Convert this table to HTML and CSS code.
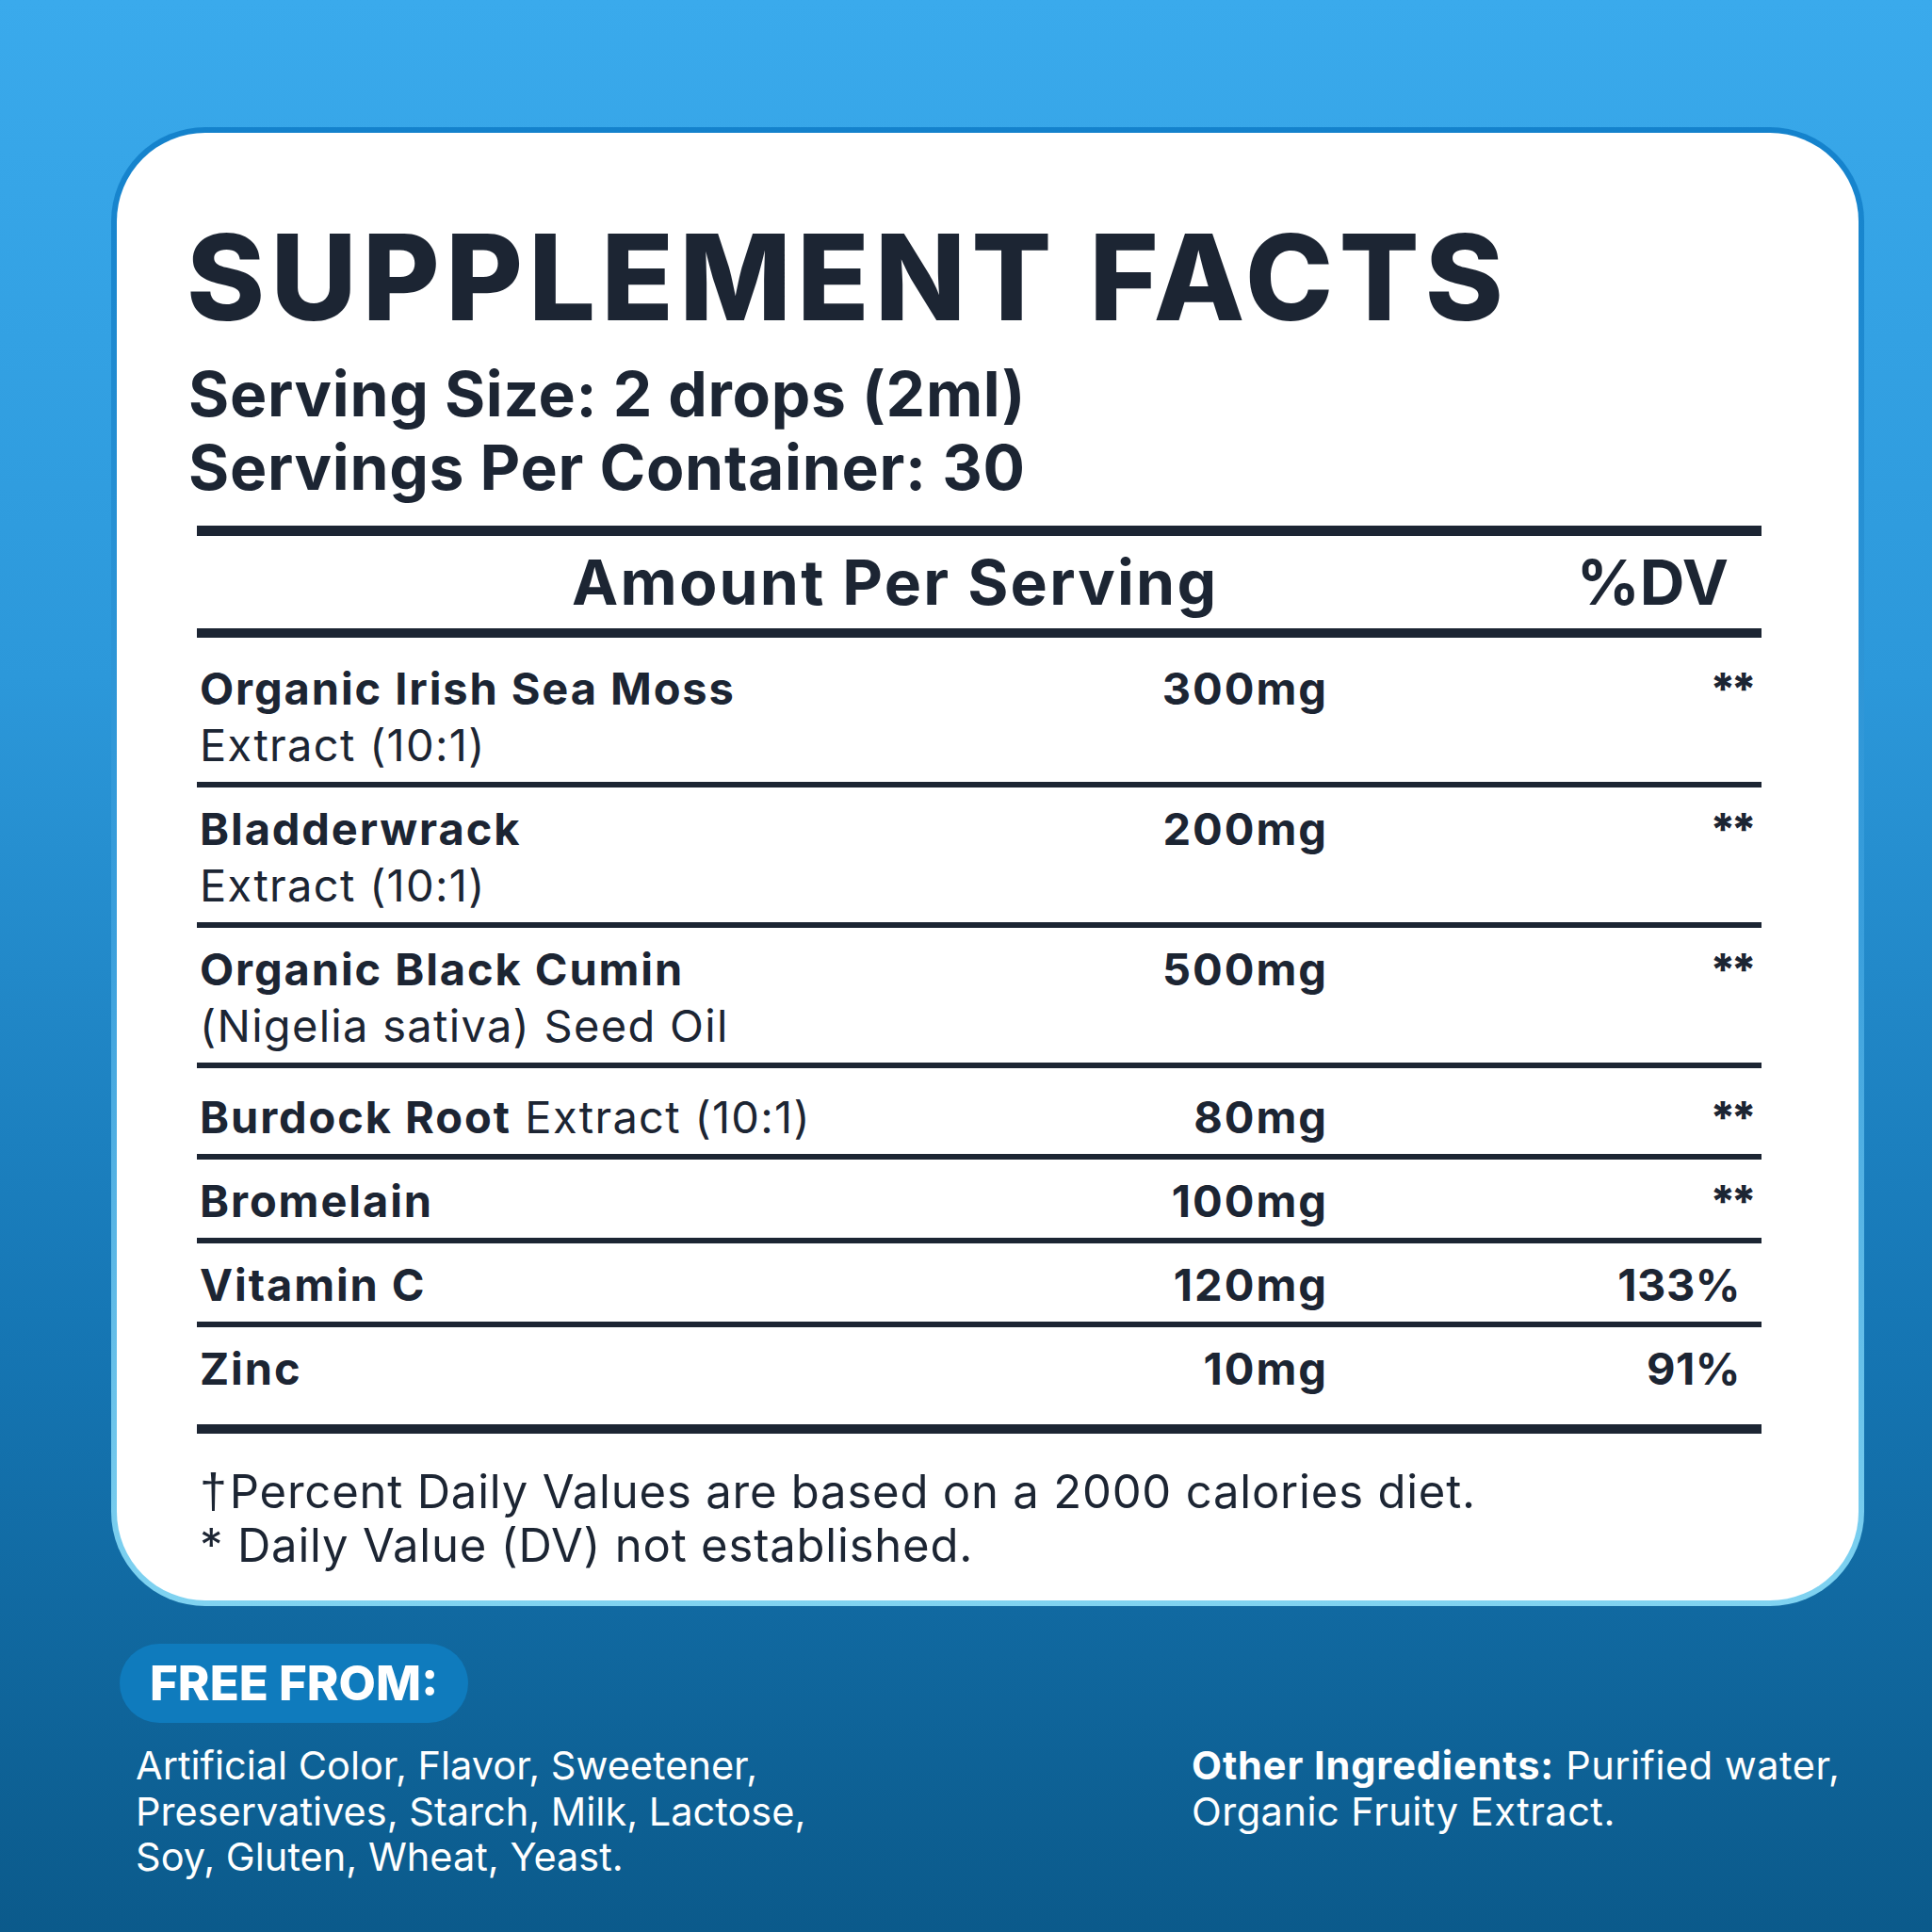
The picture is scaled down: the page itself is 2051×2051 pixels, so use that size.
FILE: index.html
```html
<!DOCTYPE html>
<html lang="en">
<head>
<meta charset="utf-8">
<title>Supplement Facts</title>
<link rel="stylesheet" href="styles.css">
</head>
<body>
<div class="page">
  <section class="card">
    <h1 class="title">SUPPLEMENT FACTS</h1>
    <p class="serving">Serving Size: 2 drops (2ml)</p>
    <p class="serving">Servings Per Container: 30</p>
    <div class="facts">
      <div class="facts-head">
        <span class="head-amount">Amount Per Serving</span>
        <span class="head-dv">%DV</span>
      </div>
      <div class="row row-first">
        <div class="name"><b>Organic Irish Sea Moss</b><br>Extract (10:1)</div>
        <div class="amt">300mg</div>
        <div class="dv">**</div>
      </div>
      <div class="row">
        <div class="name"><b>Bladderwrack</b><br>Extract (10:1)</div>
        <div class="amt">200mg</div>
        <div class="dv">**</div>
      </div>
      <div class="row">
        <div class="name"><b>Organic Black Cumin</b><br>(Nigelia sativa) Seed Oil</div>
        <div class="amt">500mg</div>
        <div class="dv">**</div>
      </div>
      <div class="row row-spaced">
        <div class="name"><b>Burdock Root</b> Extract (10:1)</div>
        <div class="amt">80mg</div>
        <div class="dv">**</div>
      </div>
      <div class="row">
        <div class="name"><b>Bromelain</b></div>
        <div class="amt">100mg</div>
        <div class="dv">**</div>
      </div>
      <div class="row">
        <div class="name"><b>Vitamin C</b></div>
        <div class="amt">120mg</div>
        <div class="dv pct">133%</div>
      </div>
      <div class="row row-last">
        <div class="name"><b>Zinc</b></div>
        <div class="amt">10mg</div>
        <div class="dv pct">91%</div>
      </div>
    </div>
    <div class="notes">
      <p><span class="dagger">†</span>Percent Daily Values are based on a 2000 calories diet.</p>
      <p>* Daily Value (DV) not established.</p>
    </div>
  </section>
  <section class="bottom">
    <div class="pill">FREE FROM:</div>
    <p class="free-list">Artificial Color, Flavor, Sweetener,<br>Preservatives, Starch, Milk, Lactose,<br>Soy, Gluten, Wheat, Yeast.</p>
    <p class="other"><b>Other Ingredients:</b> Purified water,<br>Organic Fruity Extract.</p>
  </section>
</div>
</body>
</html>
```

FILE: styles.css
```css
* { box-sizing: border-box; }
html, body { margin: 0; padding: 0; }
body { font-family: "Inter", "Noto Sans", sans-serif; color: #1c2533; }
p, h1 { margin: 0; }

.page {
  width: 2051px;
  height: 2051px;
  padding-top: 135px;
  background: linear-gradient(180deg, #3aaaec 0%, #2c98da 35%, #1677b5 68%, #0b5a8b 100%);
  overflow: hidden;
}

.card {
  margin-left: 118px;
  width: 1861px;
  height: 1570px;
  border: 6px solid transparent;
  border-radius: 100px;
  background:
    linear-gradient(#ffffff, #ffffff) padding-box,
    linear-gradient(180deg, #1482cc 0%, #3a9fdc 55%, #80d3f1 100%) border-box;
  padding: 90px 0 0 76px;
}

.title {
  font-size: 126px;
  line-height: 126px;
  font-weight: 800;
  letter-spacing: 6px;
  margin-left: -2px;
}

.serving {
  font-size: 66px;
  line-height: 78px;
  font-weight: 700;
  letter-spacing: 0.7px;
}
.title + .serving { margin-top: 22px; }

.facts {
  margin: 23px 0 0 9px;
  width: 1661px;
  border-top: 11px solid #1c2533;
  border-bottom: 10px solid #1c2533;
}

.facts-head {
  display: flex;
  justify-content: space-between;
  height: 108px;
  border-bottom: 10px solid #1c2533;
  padding: 0 35px 0 398px;
  font-size: 66px;
  line-height: 98px;
  font-weight: 700;
}
.head-amount { letter-spacing: 2.2px; }

.row {
  display: grid;
  grid-template-columns: 1fr 260px 460px;
  padding: 14px 0 9px 3px;
  border-bottom: 6px solid #1c2533;
  font-size: 47px;
  line-height: 60px;
  font-weight: 400;
  letter-spacing: 1.3px;
}
.row b { font-weight: 700; letter-spacing: 1.9px; }
.row-first { padding-top: 24px; }
.row-spaced { padding-top: 22px; }
.row-last { border-bottom: 0; padding-bottom: 29px; }

.amt { text-align: right; font-weight: 700; letter-spacing: 2px; }
.dv { text-align: right; font-weight: 800; padding-right: 10px; letter-spacing: -5px; }
.dv.pct { padding-right: 22px; letter-spacing: 0.5px; font-weight: 700; }

.notes {
  margin: 33px 0 0 12px;
  font-size: 49px;
  line-height: 57px;
  font-weight: 400;
  letter-spacing: 0.8px;
}
.dagger {
  font-family: "Liberation Sans", sans-serif;
  font-size: 52px;
  margin-right: 2px;
}

.bottom {
  display: grid;
  grid-template-columns: 1138px 1fr;
  padding-left: 127px;
  margin-top: 40px;
  color: #ffffff;
}

.pill {
  grid-column: 1;
  grid-row: 1;
  width: 370px;
  height: 84px;
  border-radius: 42px;
  background: #0f7bbd;
  padding-left: 32px;
  font-size: 51px;
  line-height: 84px;
  font-weight: 800;
}

.free-list, .other {
  grid-row: 2;
  margin-top: 21px;
  font-size: 41.5px;
  line-height: 48.5px;
  font-weight: 400;
}
.free-list { grid-column: 1; padding-left: 17px; }
.other { grid-column: 2; letter-spacing: 0.5px; }
.other b { font-weight: 700; letter-spacing: 0.9px; }
```
